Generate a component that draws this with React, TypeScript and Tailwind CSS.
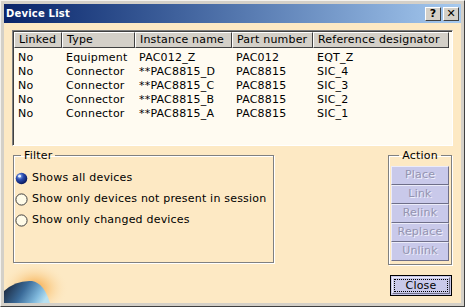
import React from 'react';

const columns = [
  { label: 'Linked', w: 'w-[48px]' },
  { label: 'Type', w: 'w-[73px]' },
  { label: 'Instance name', w: 'w-[97px]' },
  { label: 'Part number', w: 'w-[81px]' },
  { label: 'Reference designator', w: 'w-[136px]' },
];

const rows = [
  ['No', 'Equipment', 'PAC012_Z', 'PAC012', 'EQT_Z'],
  ['No', 'Connector', '**PAC8815_D', 'PAC8815', 'SIC_4'],
  ['No', 'Connector', '**PAC8815_C', 'PAC8815', 'SIC_3'],
  ['No', 'Connector', '**PAC8815_B', 'PAC8815', 'SIC_2'],
  ['No', 'Connector', '**PAC8815_A', 'PAC8815', 'SIC_1'],
];

const filters = [
  { label: 'Shows all devices', checked: true },
  { label: 'Show only devices not present in session', checked: false },
  { label: 'Show only changed devices', checked: false },
];

const actions = ['Place', 'Link', 'Relink', 'Replace', 'Unlink'];

function Radio({ checked }: { checked: boolean }) {
  return (
    <svg width="13" height="13" viewBox="0 0 13 13" className="shrink-0">
      <defs>
        <radialGradient id="rb" cx="0.35" cy="0.3" r="0.7">
          <stop offset="0" stopColor="#9ab8f0" />
          <stop offset="0.45" stopColor="#2a4cb0" />
          <stop offset="1" stopColor="#0a1a60" />
        </radialGradient>
      </defs>
      {checked ? (
        <>
          <circle cx="6.5" cy="6.5" r="5.8" fill="url(#rb)" />
          <circle cx="4.6" cy="4.2" r="1.4" fill="#e8f0ff" />
        </>
      ) : (
        <circle cx="6.5" cy="6.5" r="5.6" fill="#fffbe8" stroke="#404040" strokeWidth="1" />
      )}
    </svg>
  );
}

export default function App() {
  return (
    <div
      className="w-[465px] h-[307px] bg-[#d4d0c8] flex flex-col p-[3px] border-t border-l border-t-[#f4f2ee] border-l-[#f4f2ee] border-r border-b border-r-[#404040] border-b-[#404040] text-[11px] tracking-[0.2px] text-black"
      style={{ fontFamily: '"DejaVu Sans", Verdana, sans-serif' }}
    >
      <div className="h-[19px] flex items-center justify-between pl-[2px] pr-[2px] bg-gradient-to-r from-[#0a246a] to-[#a6caf0]">
        <span className="text-white font-bold text-[10px] tracking-[0.2px]">Device List</span>
        <div className="flex gap-[2px]">
          {['?', '✕'].map((c) => (
            <div
              key={c}
              className="w-[16px] h-[14px] bg-[#d4d0c8] border border-t-white border-l-white border-r-[#404040] border-b-[#404040] flex items-center justify-center font-bold text-[11px] leading-none tracking-normal"
            >
              {c}
            </div>
          ))}
        </div>
      </div>

      <div className="relative flex-1 bg-[#fde9c4] pt-[7px] px-[8px] overflow-hidden">
        <svg className="absolute left-0 bottom-0" width="90" height="50" viewBox="0 0 90 50">
          <defs>
            <radialGradient id="glow" cx="0.42" cy="0.6" r="0.5">
              <stop offset="0" stopColor="#f59a2e" stopOpacity="0.95" />
              <stop offset="0.45" stopColor="#f8c070" stopOpacity="0.55" />
              <stop offset="1" stopColor="#fde9c4" stopOpacity="0" />
            </radialGradient>
            <linearGradient id="planet" x1="0" y1="0.2" x2="1" y2="0.5">
              <stop offset="0" stopColor="#1a2438" />
              <stop offset="0.45" stopColor="#3a6a98" />
              <stop offset="0.8" stopColor="#7fb8dc" />
              <stop offset="1" stopColor="#b8e0f0" />
            </linearGradient>
          </defs>
          <ellipse cx="36" cy="30" rx="34" ry="26" fill="url(#glow)" />
          <path d="M0 38 Q12 27 28 28 Q40 30 46 50 L0 50 Z" fill="url(#planet)" />
        </svg>

        <div className="relative bg-[#fffbf1] h-[116px] border border-t-[#808080] border-l-[#808080] border-r-white border-b-white shadow-[inset_1px_1px_0_#404040] pt-[1px] pl-[1px]">
          <div className="flex">
            {columns.map((c) => (
              <div
                key={c.label}
                className={`${c.w} h-[16px] bg-[#d4d0c8] border border-t-white border-l-white border-r-[#404040] border-b-[#404040] pl-[4px] leading-[14px] whitespace-nowrap overflow-hidden`}
              >
                {c.label}
              </div>
            ))}
          </div>
          <div className="pt-[3px]">
            {rows.map((r, i) => (
              <div key={i} className="flex h-[14px] leading-[14px]">
                {r.map((cell, j) => (
                  <div key={j} className={`${columns[j].w} pl-[4px] whitespace-nowrap`}>
                    {cell}
                  </div>
                ))}
              </div>
            ))}
          </div>
        </div>

        <div className="relative flex justify-between mt-[3px]">
          <fieldset className="ml-[1px] w-[261px] h-[114px] border border-[#808080] shadow-[inset_1px_1px_0_#fff,1px_1px_0_#fff] pl-[1px] pr-0">
            <legend className="ml-[6px] px-[3px] leading-[13px]">Filter</legend>
            <div className="flex flex-col gap-[7px] mt-[9px]">
              {filters.map((f) => (
                <div key={f.label} className="flex items-center gap-[4px] h-[14px]">
                  <Radio checked={f.checked} />
                  <span className="whitespace-nowrap">{f.label}</span>
                </div>
              ))}
            </div>
          </fieldset>

          <div className="flex flex-col items-end mr-[1px]">
            <fieldset className="w-[64px] h-[116px] border border-[#808080] shadow-[inset_1px_1px_0_#fff,1px_1px_0_#fff] px-[2px]">
              <legend className="mx-auto px-[3px] leading-[13px]">Action</legend>
              <div className="flex flex-col mt-[4px]">
                {actions.map((a) => (
                  <div
                    key={a}
                    className="h-[19px] bg-[#c9c9ea] border border-t-[#ececfa] border-l-[#ececfa] border-r-[#6e6e88] border-b-[#6e6e88] flex items-center justify-center text-[#9494b0] [text-shadow:1px_1px_0_#f0f0fc]"
                  >
                    {a}
                  </div>
                ))}
              </div>
            </fieldset>
            <div className="mt-[10px] w-[62px] h-[21px] border border-black bg-[#c9c9ea] p-[1px]">
              <div className="h-full border border-t-[#ececfa] border-l-[#ececfa] border-r-[#6e6e88] border-b-[#6e6e88] p-[1px]">
                <div className="h-full border border-dotted border-black flex items-center justify-center leading-none">
                  Close
                </div>
              </div>
            </div>
          </div>
        </div>
      </div>
    </div>
  );
}
